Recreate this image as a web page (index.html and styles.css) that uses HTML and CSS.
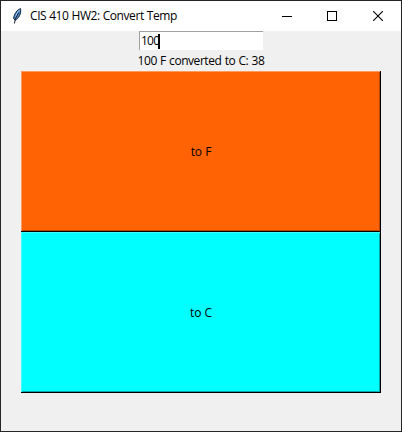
FILE: index.html
```
<!DOCTYPE html>
<html lang="en">
<head>
<meta charset="utf-8">
<title>CIS 410 HW2: Convert Temp</title>
<link rel="stylesheet" href="styles.css">
</head>
<body>
<div class="window">
  <header class="titlebar">
    <svg class="feather" width="10" height="16" viewBox="0 0 10 16">
      <path d="M8.5 .6C5.4 1.7 2 5.8 1.6 10.6L3.3 12.3C6.3 10.8 9.7 5.4 8.5.6Z" fill="#4c88cc" stroke="#15202c" stroke-width="1"/>
      <path d="M7.7 1.8C5.2 4 4.4 6.5 3.8 8.7" fill="none" stroke="#a3cff5" stroke-width="1"/>
      <path d="M6.8 4.5C4.5 8 3 11.5 2.4 15.5" fill="none" stroke="#15202c" stroke-width="1"/>
    </svg>
    <h1 class="title"><span class="title-text">CIS 410 HW2: Convert Temp</span></h1>
    <div class="controls">
      <svg width="10" height="10" shape-rendering="crispEdges"><path d="M0 5h10v1H0z"/></svg>
      <svg width="10" height="10" shape-rendering="crispEdges"><path d="M.5.5h9v9h-9z" fill="none" stroke="#000"/></svg>
      <svg class="close" width="10" height="10"><path d="M0 0l10 10M10 0L0 10" fill="none" stroke="#000" stroke-width="1.1"/></svg>
    </div>
  </header>
  <main class="content">
    <div class="entry"><span class="entry-text">100</span><span class="caret"></span></div>
    <div class="result"><span class="result-text">100 F converted to C: 38</span></div>
    <button class="convert to-f">to F</button>
    <button class="convert to-c">to C</button>
  </main>
</div>
</body>
</html>
```
FILE: styles.css
```
* { box-sizing: border-box; }
body {
  margin: 0;
  font: 12px/16px "Open Sans", "Noto Sans", sans-serif;
  color: #000;
}
.window {
  width: 402px;
  height: 432px;
  border: 1px solid #262427;
  background: #f0f0f0;
  display: flex;
  flex-direction: column;
}
.titlebar {
  height: 30px;
  flex: none;
  display: flex;
  align-items: center;
  background: #fff;
  padding: 0 18px 0 11px;
}
.feather { margin-right: 8px; }
.title {
  flex: 1;
  margin: 0;
  font-size: 12px;
  font-weight: 400;
  white-space: nowrap;
}
.title-text { letter-spacing: -0.42px; word-spacing: 0.25px; }
.controls { display: flex; gap: 35px; }
.controls svg { display: block; }
.controls .close { margin-left: 1px; }
.content {
  display: flex;
  flex-direction: column;
  padding: 0 20px;
}
.entry {
  display: flex;
  align-items: center;
  align-self: center;
  width: 124px;
  height: 19px;
  background: #fff;
  border-top: 1px solid #a0a0a0;
  border-left: 1px solid #a0a0a0;
  padding-left: 1px;
}
.entry-text { letter-spacing: -0.75px; }
.caret { width: 2px; height: 15px; margin-left: -1px; background: #000; }
.result {
  height: 21px;
  line-height: 21px;
  text-align: center;
  white-space: nowrap;
}
.result-text { letter-spacing: -0.45px; word-spacing: 0.6px; }
.convert {
  height: 161px;
  border: 0;
  padding: 0;
  font: inherit;
  letter-spacing: -0.2px;
  word-spacing: 0.5px;
  color: #000;
}
.to-f {
  background: #ff6303;
  box-shadow: inset -1px -1px #000, inset 1px 1px #ff9a5d, inset -2px -2px #b74602;
}
.to-c {
  background: #00ffff;
  box-shadow: inset -1px -1px #000, inset 1px 1px #40ffff, inset -2px -2px #00a9a9;
}
```
